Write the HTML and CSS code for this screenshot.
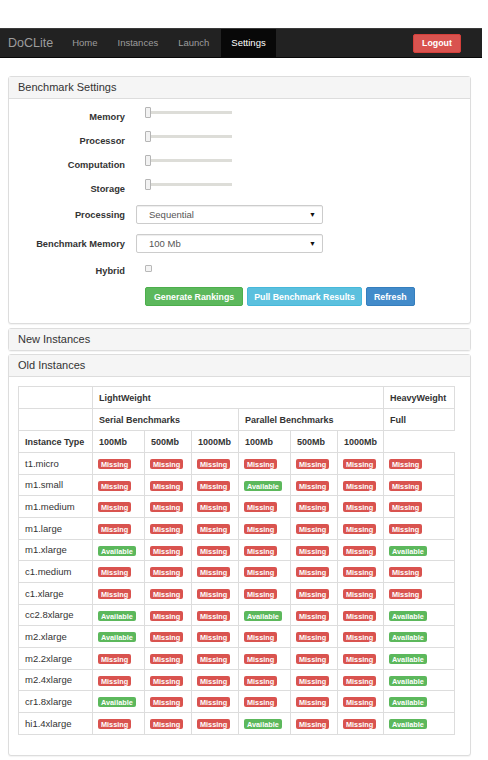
FILE: index.html
```html
<!DOCTYPE html>
<html>
<head>
    <meta charset="utf-8">
    <title>DoCLite - Settings</title>
    <link rel="stylesheet" href="styles.css">
</head>
<body>
<div class="page">
    <nav class="navbar">
        <a class="brand" href="#">DoCLite</a>
        <ul class="nav">
            <li><a href="#">Home</a></li>
            <li><a href="#">Instances</a></li>
            <li><a href="#">Launch</a></li>
            <li class="active"><a href="#">Settings</a></li>
        </ul>
        <button class="btn btn-danger logout">Logout</button>
    </nav>

    <div class="container">
        <div class="panel">
            <div class="panel-heading">Benchmark Settings</div>
            <div class="panel-body settings">
                <div class="form-row slider-row">
                    <label>Memory</label>
                    <div class="slider"><span class="thumb"></span><span class="track"></span></div>
                </div>
                <div class="form-row slider-row">
                    <label>Processor</label>
                    <div class="slider"><span class="thumb"></span><span class="track"></span></div>
                </div>
                <div class="form-row slider-row">
                    <label>Computation</label>
                    <div class="slider"><span class="thumb"></span><span class="track"></span></div>
                </div>
                <div class="form-row slider-row">
                    <label>Storage</label>
                    <div class="slider"><span class="thumb"></span><span class="track"></span></div>
                </div>
                <div class="form-row select-row first">
                    <label>Processing</label>
                    <div class="select"><span>Sequential</span><span class="caret">&#9660;</span></div>
                </div>
                <div class="form-row select-row">
                    <label>Benchmark Memory</label>
                    <div class="select"><span>100 Mb</span><span class="caret">&#9660;</span></div>
                </div>
                <div class="form-row check-row">
                    <label>Hybrid</label>
                    <span class="checkbox"></span>
                </div>
                <div class="form-row button-row">
                    <button class="btn btn-success">Generate Rankings</button>
                    <button class="btn btn-info">Pull Benchmark Results</button>
                    <button class="btn btn-primary">Refresh</button>
                </div>
            </div>
        </div>

        <div class="panel panel-new">
            <div class="panel-heading">New Instances</div>
        </div>

        <div class="panel panel-old">
            <div class="panel-heading">Old Instances</div>
            <div class="panel-body">
                <table class="instances">
                    <colgroup>
                        <col class="c-type">
                        <col class="c-a">
                        <col class="c-b">
                        <col class="c-b">
                        <col class="c-a">
                        <col class="c-b">
                        <col class="c-c">
                        <col class="c-full">
                    </colgroup>
                    <tr class="head">
                        <th></th>
                        <th colspan="6">LightWeight</th>
                        <th>HeavyWeight</th>
                    </tr>
                    <tr class="head">
                        <th></th>
                        <th colspan="3">Serial Benchmarks</th>
                        <th colspan="3">Parallel Benchmarks</th>
                        <th>Full</th>
                    </tr>
                    <tr class="head">
                        <th>Instance Type</th>
                        <th>100Mb</th>
                        <th>500Mb</th>
                        <th>1000Mb</th>
                        <th>100Mb</th>
                        <th>500Mb</th>
                        <th>1000Mb</th>
                    </tr>
                    <tr>
                        <td>t1.micro</td>
                        <td><span class="label missing">Missing</span></td>
                        <td><span class="label missing">Missing</span></td>
                        <td><span class="label missing">Missing</span></td>
                        <td><span class="label missing">Missing</span></td>
                        <td><span class="label missing">Missing</span></td>
                        <td><span class="label missing">Missing</span></td>
                        <td><span class="label missing">Missing</span></td>
                    </tr>
                    <tr>
                        <td>m1.small</td>
                        <td><span class="label missing">Missing</span></td>
                        <td><span class="label missing">Missing</span></td>
                        <td><span class="label missing">Missing</span></td>
                        <td><span class="label available">Available</span></td>
                        <td><span class="label missing">Missing</span></td>
                        <td><span class="label missing">Missing</span></td>
                        <td><span class="label missing">Missing</span></td>
                    </tr>
                    <tr>
                        <td>m1.medium</td>
                        <td><span class="label missing">Missing</span></td>
                        <td><span class="label missing">Missing</span></td>
                        <td><span class="label missing">Missing</span></td>
                        <td><span class="label missing">Missing</span></td>
                        <td><span class="label missing">Missing</span></td>
                        <td><span class="label missing">Missing</span></td>
                        <td><span class="label missing">Missing</span></td>
                    </tr>
                    <tr>
                        <td>m1.large</td>
                        <td><span class="label missing">Missing</span></td>
                        <td><span class="label missing">Missing</span></td>
                        <td><span class="label missing">Missing</span></td>
                        <td><span class="label missing">Missing</span></td>
                        <td><span class="label missing">Missing</span></td>
                        <td><span class="label missing">Missing</span></td>
                        <td><span class="label missing">Missing</span></td>
                    </tr>
                    <tr>
                        <td>m1.xlarge</td>
                        <td><span class="label available">Available</span></td>
                        <td><span class="label missing">Missing</span></td>
                        <td><span class="label missing">Missing</span></td>
                        <td><span class="label missing">Missing</span></td>
                        <td><span class="label missing">Missing</span></td>
                        <td><span class="label missing">Missing</span></td>
                        <td><span class="label available">Available</span></td>
                    </tr>
                    <tr>
                        <td>c1.medium</td>
                        <td><span class="label missing">Missing</span></td>
                        <td><span class="label missing">Missing</span></td>
                        <td><span class="label missing">Missing</span></td>
                        <td><span class="label missing">Missing</span></td>
                        <td><span class="label missing">Missing</span></td>
                        <td><span class="label missing">Missing</span></td>
                        <td><span class="label missing">Missing</span></td>
                    </tr>
                    <tr>
                        <td>c1.xlarge</td>
                        <td><span class="label missing">Missing</span></td>
                        <td><span class="label missing">Missing</span></td>
                        <td><span class="label missing">Missing</span></td>
                        <td><span class="label missing">Missing</span></td>
                        <td><span class="label missing">Missing</span></td>
                        <td><span class="label missing">Missing</span></td>
                        <td><span class="label missing">Missing</span></td>
                    </tr>
                    <tr>
                        <td>cc2.8xlarge</td>
                        <td><span class="label available">Available</span></td>
                        <td><span class="label missing">Missing</span></td>
                        <td><span class="label missing">Missing</span></td>
                        <td><span class="label available">Available</span></td>
                        <td><span class="label missing">Missing</span></td>
                        <td><span class="label missing">Missing</span></td>
                        <td><span class="label available">Available</span></td>
                    </tr>
                    <tr>
                        <td>m2.xlarge</td>
                        <td><span class="label available">Available</span></td>
                        <td><span class="label missing">Missing</span></td>
                        <td><span class="label missing">Missing</span></td>
                        <td><span class="label missing">Missing</span></td>
                        <td><span class="label missing">Missing</span></td>
                        <td><span class="label missing">Missing</span></td>
                        <td><span class="label available">Available</span></td>
                    </tr>
                    <tr>
                        <td>m2.2xlarge</td>
                        <td><span class="label missing">Missing</span></td>
                        <td><span class="label missing">Missing</span></td>
                        <td><span class="label missing">Missing</span></td>
                        <td><span class="label missing">Missing</span></td>
                        <td><span class="label missing">Missing</span></td>
                        <td><span class="label missing">Missing</span></td>
                        <td><span class="label available">Available</span></td>
                    </tr>
                    <tr>
                        <td>m2.4xlarge</td>
                        <td><span class="label missing">Missing</span></td>
                        <td><span class="label missing">Missing</span></td>
                        <td><span class="label missing">Missing</span></td>
                        <td><span class="label missing">Missing</span></td>
                        <td><span class="label missing">Missing</span></td>
                        <td><span class="label missing">Missing</span></td>
                        <td><span class="label available">Available</span></td>
                    </tr>
                    <tr>
                        <td>cr1.8xlarge</td>
                        <td><span class="label available">Available</span></td>
                        <td><span class="label missing">Missing</span></td>
                        <td><span class="label missing">Missing</span></td>
                        <td><span class="label missing">Missing</span></td>
                        <td><span class="label missing">Missing</span></td>
                        <td><span class="label missing">Missing</span></td>
                        <td><span class="label available">Available</span></td>
                    </tr>
                    <tr>
                        <td>hi1.4xlarge</td>
                        <td><span class="label missing">Missing</span></td>
                        <td><span class="label missing">Missing</span></td>
                        <td><span class="label missing">Missing</span></td>
                        <td><span class="label available">Available</span></td>
                        <td><span class="label missing">Missing</span></td>
                        <td><span class="label missing">Missing</span></td>
                        <td><span class="label available">Available</span></td>
                    </tr>
                </table>
            </div>
        </div>
    </div>
</div>
</body>
</html>
```

FILE: styles.css
```css
* {
    box-sizing: border-box;
}

body {
    margin: 0;
    font-family: "Liberation Sans", Arial, sans-serif;
    color: #333333;
    background-color: #FFFFFF;
}

.page {
    width: 482px;
}

/* top navigation */

.navbar {
    display: flex;
    align-items: stretch;
    height: 30px;
    margin-top: 28px;
    background-color: #222222;
    border-top: 1px solid #3A3A3A;
    border-bottom: 1px solid #080808;
}

.brand {
    padding: 0 9px 0 8px;
    font-size: 12.5px;
    line-height: 28px;
    color: #9D9D9D;
    text-decoration: none;
}

.nav {
    display: flex;
    margin: 0;
    padding: 0;
    list-style: none;
}

.nav a {
    display: block;
    padding: 0 10px;
    font-size: 9.5px;
    line-height: 28px;
    color: #9D9D9D;
    text-decoration: none;
}

.nav .active a {
    margin-left: 2px;
    background-color: #080808;
    color: #FFFFFF;
}

.btn {
    height: 19px;
    padding: 0 8px;
    font-family: inherit;
    font-size: 8.8px;
    font-weight: bold;
    color: #FFFFFF;
    border: 1px solid transparent;
    border-radius: 2px;
}

.logout {
    align-self: center;
    margin-left: auto;
    margin-right: 21px;
    width: 48px;
    padding: 0;
}

.btn-danger {
    background-color: #D9534F;
    border-color: #D43F3A;
}

.btn-success {
    background-color: #5CB85C;
    border-color: #4CAE4C;
}

.btn-info {
    background-color: #5BC0DE;
    border-color: #46B8DA;
}

.btn-primary {
    background-color: #428BCA;
    border-color: #357EBD;
}

/* panels */

.container {
    padding: 18px 11px 5px 8px;
}

.panel {
    background-color: #FFFFFF;
    border: 1px solid #DDDDDD;
    border-radius: 3px;
    box-shadow: 0 1px 1px rgba(0, 0, 0, 0.05);
}

.panel-new {
    margin: 4px 0 3px;
}

.panel-heading {
    height: 22px;
    padding: 0 9px;
    font-size: 11px;
    line-height: 21px;
    color: #333333;
    background-color: #F5F5F5;
    border-bottom: 1px solid #DDDDDD;
}

.panel-heading:last-child {
    height: 21px;
    border-bottom: 0;
}

/* settings form */

.settings {
    padding: 6px 0 17px;
}

.form-row {
    display: flex;
}

.form-row label {
    width: 117px;
    padding-right: 1px;
    align-self: center;
    text-align: right;
    font-size: 9.3px;
    font-weight: bold;
}

.slider-row {
    height: 24px;
}

.slider {
    display: flex;
    align-items: center;
    width: 87px;
    height: 11px;
    margin: 2px 0 0 19px;
}

.thumb {
    width: 6px;
    height: 11px;
    background-color: #F2F2F2;
    border: 1px solid #B5B5B5;
    border-radius: 1px;
}

.track {
    flex: 1;
    height: 3px;
    background-color: #DDDDD8;
}

.select-row {
    height: 19px;
    margin-top: 10px;
}

.select-row.first {
    margin-top: 4px;
}

.select {
    display: flex;
    align-items: center;
    justify-content: space-between;
    width: 187px;
    margin-left: 10px;
    padding: 0 6px 0 12px;
    font-size: 9.5px;
    color: #555555;
    background-color: #FFFFFF;
    border: 1px solid #CCCCCC;
    border-radius: 2px;
    box-shadow: inset 0 1px 1px rgba(0, 0, 0, 0.075);
}

.caret {
    font-size: 7px;
    color: #111111;
}

.check-row {
    height: 18px;
    margin-top: 9px;
}

.checkbox {
    width: 7px;
    height: 7px;
    margin: 3px 0 0 19px;
    background-color: #F4F4F4;
    border: 1px solid #B8B8B8;
    border-radius: 1px;
}

.button-row {
    gap: 4px;
    margin: 7px 0 0 136px;
}

.btn-info {
    padding: 0 6px;
}

.btn-primary {
    padding: 0 7px;
}

/* old instances table */

.panel-old .panel-body {
    padding: 9px 0 20px 9px;
}

.instances {
    width: 436px;
    table-layout: fixed;
    border-collapse: collapse;
    font-size: 9.5px;
}

.c-type { width: 74px; }
.c-a { width: 52px; }
.c-b { width: 47px; }
.c-c { width: 46px; }
.c-full { width: 71px; }

.instances th,
.instances td {
    padding: 0 4px 0 6px;
    text-align: left;
    white-space: nowrap;
    border: 1px solid #DDDDDD;
}

.instances th {
    font-size: 9px;
    font-weight: bold;
}

.instances tr {
    height: 21.67px;
}

.instances tr.head {
    height: 22px;
}

.instances td .label {
    margin-left: -1px;
}

.label {
    display: inline-block;
    padding: 2px 3px 1px;
    font-size: 7.3px;
    font-weight: bold;
    line-height: 7px;
    color: #FFFFFF;
    border-radius: 2px;
    vertical-align: middle;
}

.missing {
    background-color: #D9534F;
}

.available {
    background-color: #5CB85C;
}
```
